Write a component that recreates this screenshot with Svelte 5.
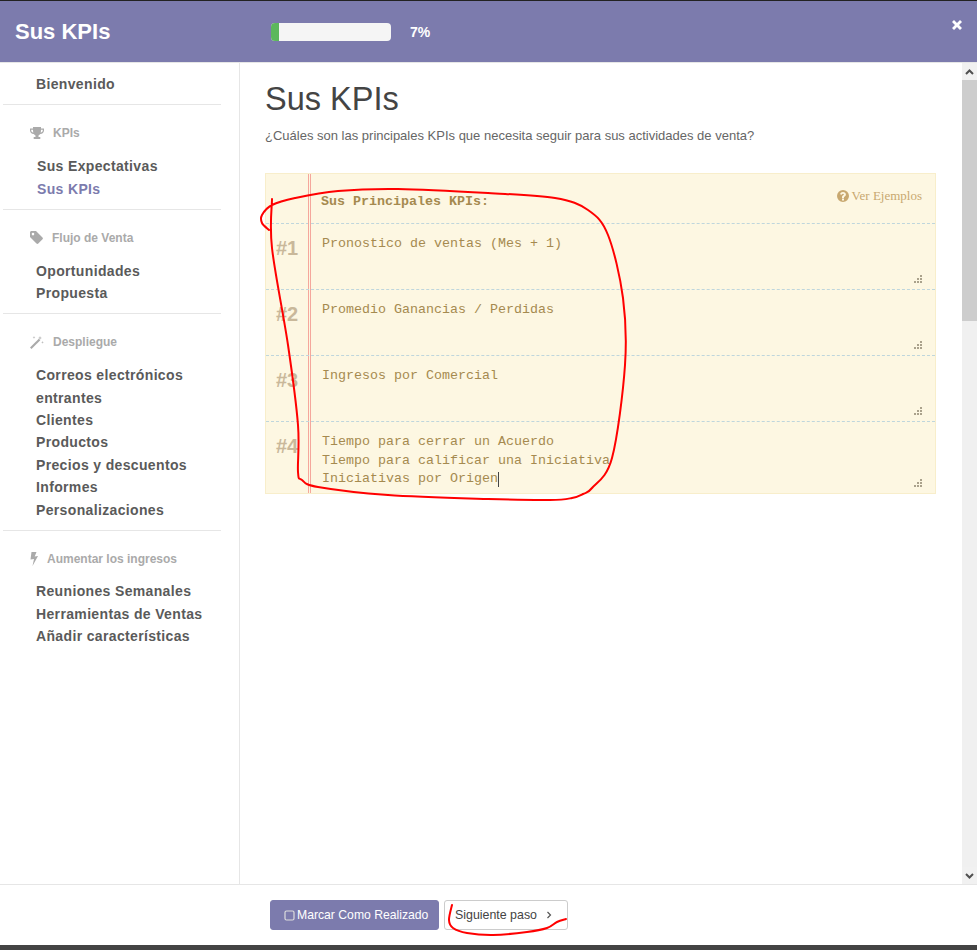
<script>
  const sections = [
    { title: 'KPIs', icon: 'trophy', w: 14, items: ['Sus Expectativas', 'Sus KPIs'] },
    { title: 'Flujo de Venta', icon: 'tag', w: 13, items: ['Oportunidades', 'Propuesta'] },
    {
      title: 'Despliegue',
      icon: 'magic',
      w: 14,
      items: ['Correos electrónicos entrantes', 'Clientes', 'Productos', 'Precios y descuentos', 'Informes', 'Personalizaciones']
    },
    { title: 'Aumentar los ingresos', icon: 'bolt', w: 8, items: ['Reuniones Semanales', 'Herramientas de Ventas', 'Añadir características'] }
  ];

  const rows = [
    { n: 1, text: 'Pronostico de ventas (Mes + 1)' },
    { n: 2, text: 'Promedio Ganancias / Perdidas' },
    { n: 3, text: 'Ingresos por Comercial' },
    { n: 4, text: 'Tiempo para cerrar un Acuerdo\nTiempo para calificar una Iniciativa\nIniciativas por Origen', tall: true }
  ];

  // hand-drawn marks on top of the screenshot
  const loop = [[272,199],[272,248],[288,345],[298,425],[298,472],[302,480],[318,487],[388,495],[488,499],[550,500],[572,498],[583,494],[592,488],[612,458],[625,365],[623,298],[608,235],[588,210],[555,198],[488,193],[398,189],[338,191],[295,198],[272,205],[262,215],[262,223],[269,230]];
  const underline = [[452,905],[449,920],[453,928],[467,933],[493,935],[527,932],[547,928],[557,922],[566,919]];

  function smooth(p) {
    let d = `M${p[0][0]} ${p[0][1]}`;
    for (let i = 0; i < p.length - 1; i++) {
      const a = p[Math.max(i - 1, 0)], b = p[i], c = p[i + 1], e = p[Math.min(i + 2, p.length - 1)];
      d += `C${b[0] + (c[0] - a[0]) / 6} ${b[1] + (c[1] - a[1]) / 6} ${c[0] - (e[0] - b[0]) / 6} ${c[1] - (e[1] - b[1]) / 6} ${c[0]} ${c[1]}`;
    }
    return d;
  }
</script>

<div class="page">
  <header class="top">
    <div class="top__title">Sus KPIs</div>
    <div class="progress"><div class="progress__bar"></div></div>
    <div class="top__pct">7%</div>
    <svg class="top__close" viewBox="0 0 12 12" width="12" height="12" aria-hidden="true">
      <path d="M1 3 3 1l3 3 3-3 2 2-3 3 3 3-2 2-3-3-3 3-2-2 3-3z" fill="#fff" />
    </svg>
  </header>

  <div class="body">
    <nav class="side">
      <a class="side__item">Bienvenido</a>
      {#each sections as s}
        <div class="side__section" class:side__section--last={s.icon === 'bolt'}>
          <div class="side__head">
            <svg viewBox="{s.icon === 'bolt' ? 2 : 0} 0 {s.w} 14" width={s.w} height="14" aria-hidden="true">
              {#if s.icon === 'trophy'}
                <path d="M3 1h8v1.500h3v2c0 2-1.600 3.300-3.700 3.500-.5.7-1.100 1.100-1.800 1.400V11h1.800v2H3.700v-2h1.800V9.400C4.800 9.100 4.200 8.700 3.700 8 1.600 7.800 0 6.500 0 4.500v-2h3zM1.200 3.700v.8c0 1 .8 1.900 2.100 2.200-.2-.9-.3-2-.3-3zm11.600 0H11c0 1-.1 2.100-.3 3 1.300-.3 2.100-1.200 2.100-2.200z" fill="#aaa" />
              {:else if s.icon === 'tag'}
                <path d="M0 1.500C0 .7.700 0 1.500 0H6l6.500 6.500c.5.500.5 1.300 0 1.800l-4.200 4.200c-.5.500-1.300.5-1.800 0L0 6zm3 2.900a1.300 1.300 0 1 0 0-2.600 1.300 1.300 0 0 0 0 2.600z" fill="#aaa" />
              {:else if s.icon === 'magic'}
                <path d="M0 12.500 8.800 3.700l1.500 1.500L1.500 14z" fill="#aaa" /><path d="m10 1 .6 1.400L12 3l-1.400.6L10 5l-.6-1.400L8 3l1.400-.6zM4 1l.4 1 1 .4-1 .4L4 4l-.4-1.200-1-.4 1-.4zm8.500 5 .4 1 1 .4-1 .4-.4 1-.4-1-1-.4 1-.4z" fill="#bbb" />
              {:else}
                <path d="M3.500 0h5L6.700 4.500 10 4 4.500 14 6 7 2.500 7.600z" fill="#aaa" />
              {/if}
            </svg>
            <span>{s.title}</span>
          </div>
          <div class="side__list">
            {#each s.items as item}
              <a class="side__item" class:side__item--active={item === 'Sus KPIs'} class:side__item--nudge={s.title === 'KPIs'}>{item}</a>
            {/each}
          </div>
        </div>
      {/each}
    </nav>

    <main class="main">
      <h1 class="main__title">Sus KPIs</h1>
      <p class="main__desc">¿Cuáles son las principales KPIs que necesita seguir para sus actividades de venta?</p>

      <div class="sheet">
        <div class="sheet__margin"></div>
        <div class="sheet__head">
          <span class="sheet__label">Sus Principales KPIs:</span>
          <a class="sheet__help">
            <svg viewBox="0 0 12 12" width="12" height="12" aria-hidden="true">
              <path fill-rule="evenodd" d="M6 0a6 6 0 1 1 0 12A6 6 0 0 1 6 0zM5 8.500v2h2v-2zM6 2C4.500 2 3.400 2.800 3.100 4.200l1.700.5C5 4 5.400 3.700 6 3.700c.5 0 .9.300.9.700 0 .4-.3.600-.8.900-.7.400-1.100 1-1.100 1.800V8h2v-.5c0-.4.200-.6.700-.9.800-.5 1.200-1.200 1.200-2.100C8.900 3 7.700 2 6 2z" fill="#c8a870" />
            </svg>
            Ver Ejemplos
          </a>
        </div>
        {#each rows as row}
          <div class="row" class:row--tall={row.tall}>
            <div class="row__num">#{row.n}</div>
            <textarea class="row__input" readonly value={row.text}></textarea>
            {#if row.tall}<span class="caret"></span>{/if}
            <svg class="grip" viewBox="0 0 8 8" width="8" height="8" aria-hidden="true">
              <path d="M6 0h2v2H6zM3 3h2v2H3zM6 3h2v2H6zM0 6h2v2H0zM3 6h2v2H3zM6 6h2v2H6z" fill="#aaa28c" />
            </svg>
          </div>
        {/each}
      </div>
    </main>

    <div class="scroll">
      <div class="scroll__btn">
        <svg viewBox="0 0 9 6" width="9" height="6" aria-hidden="true"><path d="M1 5 4.500 1.500 8 5" fill="none" stroke="#505050" stroke-width="2" /></svg>
      </div>
      <div class="scroll__thumb"></div>
      <div class="scroll__track"></div>
      <div class="scroll__btn">
        <svg viewBox="0 0 9 6" width="9" height="6" aria-hidden="true"><path d="M1 1 4.500 4.500 8 1" fill="none" stroke="#505050" stroke-width="2" /></svg>
      </div>
    </div>
  </div>

  <footer class="foot">
    <button class="btn btn--primary" type="button">
      <svg viewBox="0 0 11 11" width="11" height="11" aria-hidden="true"><rect x="1" y="1" width="9" height="9" rx="1.500" fill="none" stroke="#ddd" stroke-width="1.200" /></svg>
      Marcar Como Realizado
    </button>
    <button class="btn btn--ghost" type="button">
      Siguiente paso
      <svg viewBox="0 0 6 8" width="6" height="8" aria-hidden="true"><path d="M1.500 1 4.500 4 1.500 7" fill="none" stroke="#555" stroke-width="1.200" /></svg>
    </button>
  </footer>
  <div class="bottom"></div>

  <svg class="marks" viewBox="0 0 977 950" width="977" height="950" aria-hidden="true">
    <path d={smooth(loop)} />
    <path d={smooth(underline)} />
  </svg>
</div>

<style>
  :global(body) {
    margin: 0;
    background: #fff;
  }

  .page {
    position: relative;
    display: flex;
    flex-direction: column;
    width: 977px;
    height: 950px;
    overflow: hidden;
    border-top: 1px solid #222;
    box-sizing: border-box;
    font-family: "Liberation Sans", Arial, sans-serif;
    color: #555;
  }

  .top {
    position: relative;
    display: flex;
    align-items: center;
    flex-shrink: 0;
    height: 62px;
    background: #7c7bad;
    color: #fff;
    box-sizing: border-box;
    border-bottom: 1px solid #e6e6e6;
  }

  .top__title {
    width: 271px;
    padding-left: 15px;
    box-sizing: border-box;
    font-size: 22px;
    font-weight: 700;
  }

  .progress {
    width: 120px;
    height: 18px;
    margin-top: 1px;
    background: #f5f5f5;
    border-radius: 4px;
    overflow: hidden;
  }

  .progress__bar {
    width: 8px;
    height: 100%;
    background: #5cb85c;
  }

  .top__pct {
    margin: 1px 0 0 19px;
    font-size: 14px;
    font-weight: 700;
  }

  .top__close {
    position: absolute;
    top: 18px;
    right: 14px;
  }

  .body {
    flex: 1;
    display: flex;
    min-height: 0;
  }

  .side {
    width: 240px;
    flex-shrink: 0;
    box-sizing: border-box;
    padding: 9.8px 18px 0 3px;
    border-right: 1px solid #e6e6e6;
  }

  .side__item {
    display: block;
    padding-left: 33px;
    font-size: 14px;
    line-height: 22.4px;
    font-weight: 700;
    letter-spacing: 0.35px;
    color: #5a5a5a;
  }

  .side__item--nudge {
    padding-left: 34px;
  }

  .side__item--active {
    color: #7c7bad;
  }

  .side__section {
    margin-top: 9px;
    border-top: 1px solid #e6e6e6;
    padding-top: 18px;
  }

  .side__section:nth-of-type(1) {
    margin-top: 8.6px;
  }

  /* snap a few lists to the same pixel rows as the original */
  .side__section:nth-of-type(1) .side__list {
    margin-top: 12.3px;
  }

  .side__section:nth-of-type(2) {
    margin-top: 8.7px;
  }

  .side__section:nth-of-type(3) .side__list {
    margin-top: 11.7px;
  }

  .side__section--last {
    margin-top: 9.3px;
    padding-top: 17.5px;
  }

  .side__head {
    display: flex;
    align-items: center;
    gap: 9px;
    height: 20px;
    padding-left: 27px;
    font-size: 12px;
    font-weight: 700;
    color: #aaa;
  }

  .side__list {
    margin-top: 12px;
  }

  .side__section--last .side__list {
    margin-top: 11.5px;
  }

  .main {
    flex: 1;
    min-width: 0;
    padding: 0 26px 0 25px;
  }

  .main__title {
    margin: 14px 0 0;
    font-size: 32.5px;
    line-height: 44px;
    font-weight: 400;
    color: #444;
  }

  .main__desc {
    margin: 6px 0 0;
    font-size: 13px;
    line-height: 18px;
    color: #666;
  }

  .sheet {
    position: relative;
    margin-top: 28px;
    background: #fdf7e2;
    border: 1px solid #f8eecb;
    box-sizing: border-box;
    height: 321px;
  }

  .sheet__margin {
    position: absolute;
    top: 0;
    bottom: 0;
    left: 42px;
    width: 1px;
    border-left: 1px solid #f5a79c;
    border-right: 1px solid #f5a79c;
  }

  .sheet__head {
    display: flex;
    justify-content: space-between;
    align-items: center;
    height: 50px;
    padding: 0 13px 0 55px;
    border-bottom: 1px dashed #bfd6dc;
    box-sizing: border-box;
  }

  .sheet__label {
    font-family: "Liberation Mono", "Courier New", monospace;
    font-size: 13.33px;
    font-weight: 700;
    color: #a58a4f;
    margin-top: 5px;
  }

  .sheet__help {
    display: flex;
    align-items: center;
    gap: 3px;
    font-family: "Liberation Serif", "Times New Roman", serif;
    font-size: 13px;
    color: #c8a870;
    margin-top: -5px;
  }

  .row {
    position: relative;
    display: flex;
    height: 66px;
    box-sizing: border-box;
    border-bottom: 1px dashed #bfd6dc;
  }

  .row--tall {
    height: 71px;
    border-bottom: 0;
  }

  .row__num {
    width: 45px;
    padding-left: 10px;
    box-sizing: border-box;
    padding-top: 12px;
    font-size: 20px;
    line-height: 24px;
    font-weight: 700;
    color: #c9b89a;
  }

  .row__input {
    flex: 1;
    display: block;
    height: 100%;
    margin: 0 13px 0 0;
    padding: 11px 11px 0;
    border: 0;
    outline: 0;
    background: transparent;
    resize: none;
    overflow: hidden;
    box-sizing: border-box;
    font-family: "Liberation Mono", "Courier New", monospace;
    font-size: 13.33px;
    line-height: 18.5px;
    color: #a58a4f;
  }

  .grip {
    position: absolute;
    right: 13px;
    bottom: 6px;
  }

  .caret {
    position: absolute;
    left: 232px;
    top: 50px;
    width: 1px;
    height: 15px;
    background: #444;
  }

  .scroll {
    display: flex;
    flex-direction: column;
    width: 15px;
    flex-shrink: 0;
    margin-left: auto;
    background: #f0f0f0;
  }

  .scroll__btn {
    display: flex;
    align-items: center;
    justify-content: center;
    height: 17px;
    flex-shrink: 0;
    background: #f1f1f1;
  }

  .scroll__thumb {
    height: 241px;
    flex-shrink: 0;
    background: #cdcdcd;
  }

  .scroll__track {
    flex: 1;
  }

  .foot {
    display: flex;
    align-items: center;
    gap: 5px;
    flex-shrink: 0;
    height: 61px;
    padding-left: 270px;
    box-sizing: border-box;
    border-top: 1px solid #e6e6e6;
    background: #fff;
  }

  .btn {
    display: inline-flex;
    align-items: center;
    height: 30px;
    box-sizing: border-box;
    border-radius: 3px;
    font-family: inherit;
    font-size: 12.4px;
    white-space: nowrap;
    padding: 0;
  }

  .btn--primary {
    gap: 2px;
    width: 169px;
    padding-left: 13px;
    background: #7c7bad;
    border: 1px solid #7c7bad;
    color: #fff;
    font-size: 12.2px;
  }

  .btn--ghost {
    gap: 9px;
    width: 124px;
    padding-left: 10px;
    background: #fff;
    border: 1px solid #ccc;
    color: #444;
  }

  .bottom {
    height: 5px;
    flex-shrink: 0;
    background: #444;
  }

  .marks {
    position: absolute;
    top: -1px;
    left: 0;
    pointer-events: none;
  }

  .marks path {
    fill: none;
    stroke: #f00;
    stroke-width: 2;
    stroke-linecap: round;
    stroke-linejoin: round;
  }
</style>
